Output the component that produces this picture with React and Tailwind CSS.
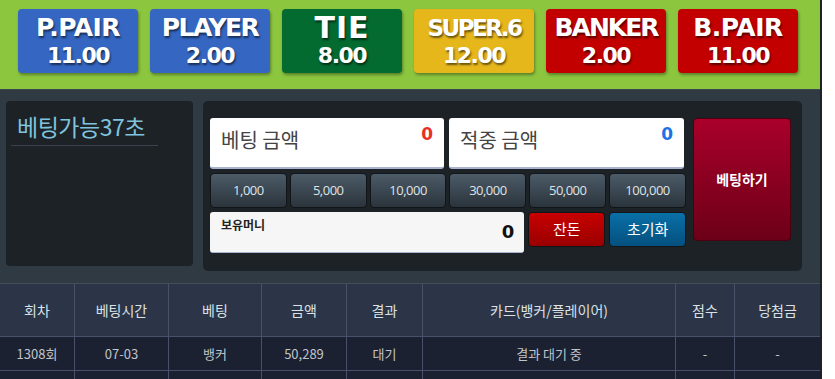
import React from 'react';

const odds = [
    { name: 'P.PAIR', value: '11.00', bg: 'bg-[#3466c2]', title: 'text-[25px] tracking-[-0.5px]' },
    { name: 'PLAYER', value: '2.00', bg: 'bg-[#3466c2]', title: 'text-[25px] tracking-[-1.5px]' },
    { name: 'TIE', value: '8.00', bg: 'bg-[#036a30]', title: 'text-[30px] tracking-[1px]' },
    { name: 'SUPER.6', value: '12.00', bg: 'bg-[#e6b71b]', title: 'text-[23px] tracking-[-2.5px]' },
    { name: 'BANKER', value: '2.00', bg: 'bg-[#c20000]', title: 'text-[25px] tracking-[-2px]' },
    { name: 'B.PAIR', value: '11.00', bg: 'bg-[#c20000]', title: 'text-[25px] tracking-[-0.5px]' },
];

const chips = ['1,000', '5,000', '10,000', '30,000', '50,000', '100,000'];

const columns = [
    { label: '회차', w: 'w-[74px]' },
    { label: '베팅시간', w: 'w-[94px]' },
    { label: '베팅', w: 'w-[93px]' },
    { label: '금액', w: 'w-[85px]' },
    { label: '결과', w: 'w-[76px]' },
    { label: '카드(뱅커/플레이어)', w: 'w-[253px]' },
    { label: '점수', w: 'w-[59px]' },
    { label: '당첨금', w: 'flex-1' },
];

const row = ['1308회', '07-03', '뱅커', '50,289', '대기', '결과 대기 중', '-', '-'];

const shadow = { textShadow: '1px 2px 2px rgba(0,0,0,0.55)' };

export default function App() {
    return (
        <div className="w-[822px] border-r-2 border-[#1d2226] font-['Noto_Sans_CJK_KR','Noto_Sans',sans-serif]">
            {/* 배당 버튼 */}
            <div className="h-[90px] bg-[#8cc63f] flex gap-[12px] pl-[18px] pt-[9px] border-b border-[#3b4650]">
                {odds.map(o => (
                    <div key={o.name} className={`${o.bg} w-[120px] h-[64px] rounded-[4px] shadow-[1px_2px_3px_rgba(0,0,0,0.35)] flex flex-col items-center pt-[4px] text-white font-['DejaVu_Sans',sans-serif] font-bold`} style={shadow}>
                        <div className={`${o.title} leading-[30px] whitespace-nowrap`}>{o.name}</div>
                        <div className="text-[22px] leading-[26px] tracking-[-1.5px]">{o.value}</div>
                    </div>
                ))}
            </div>

            {/* 베팅 영역 */}
            <div className="bg-[#2f3a43] h-[193px] flex pt-[11px] pl-[6px] gap-[10px]">
                <div className="w-[187px] h-[165px] bg-[#1c2226] rounded-[4px] pt-[10px] px-[5px]">
                    <div className="text-[#7fc3de] text-[23px] leading-[31px] pl-[6px] pb-[3px] border-b border-[#3a434b] w-[147px] whitespace-nowrap tracking-[-0.5px]">베팅가능37초</div>
                </div>
                <div className="w-[599px] h-[170px] bg-[#1c2226] rounded-[5px] flex pl-[7px] pt-[17px] gap-[7px]">
                    <div className="w-[476px] flex flex-col gap-[4px]">
                        <div className="flex gap-[5px]">
                            <div className="w-[234px] h-[51px] bg-white rounded-[3px] border-b-2 border-[#aab4d0] flex justify-between px-[11px] pt-[4px]">
                                <span className="text-[#444] text-[20px] leading-[36px]">베팅 금액</span>
                                <span className="text-[#e8302a] font-bold text-[17px] leading-[24px] font-['DejaVu_Sans',sans-serif]">0</span>
                            </div>
                            <div className="w-[235px] h-[51px] bg-white rounded-[3px] border-b-2 border-[#aab4d0] flex justify-between px-[11px] pt-[4px]">
                                <span className="text-[#444] text-[20px] leading-[36px]">적중 금액</span>
                                <span className="text-[#1c72e6] font-bold text-[17px] leading-[24px] font-['DejaVu_Sans',sans-serif]">0</span>
                            </div>
                        </div>
                        <div className="flex gap-[3px]">
                            {chips.map(c => (
                                <div key={c} className="w-[77px] h-[35px] rounded-[4px] border border-[#111518] bg-gradient-to-b from-[#4c5b68] to-[#2b343c] text-[#dfe3e6] text-[13px] flex items-center justify-center tracking-[-0.5px] font-['Open_Sans',sans-serif]">{c}</div>
                            ))}
                        </div>
                        <div className="flex gap-[4px]">
                            <div className="w-[315px] h-[41px] bg-[#f6f6f6] rounded-[3px] border-b border-[#aab4d0] flex justify-between pl-[11px] pr-[10px]">
                                <span className="text-[#222] text-[12px] font-bold leading-[26px]">보유머니</span>
                                <span className="text-[#111] text-[18px] font-bold leading-[40px] font-['DejaVu_Sans',sans-serif]">0</span>
                            </div>
                            <div className="w-[77px] h-[35px] rounded-[4px] border border-[#111518] bg-gradient-to-b from-[#c80000] to-[#9a0000] text-white text-[15px] flex items-center justify-center">잔돈</div>
                            <div className="w-[77px] h-[35px] rounded-[4px] border border-[#111518] bg-gradient-to-b from-[#0a70a8] to-[#04507e] text-white text-[15px] flex items-center justify-center">초기화</div>
                        </div>
                    </div>
                    <div className="w-[98px] h-[123px] rounded-[4px] bg-gradient-to-b from-[#a9002a] to-[#6d0018] border border-[#4a0010] text-white font-bold text-[14px] flex items-center justify-center">베팅하기</div>
                </div>
            </div>

            {/* 베팅 내역 */}
            <div className="border-t border-[#434e5c]">
                <div className="flex bg-[#2b3547] h-[53px] border-b border-[#47526a]">
                    {columns.map((c, i) => (
                        <div key={c.label} className={`${c.w} ${i > 0 ? 'border-l border-[#47526a]' : ''} flex items-center justify-center text-[#dde1e6] text-[14px]`}>{c.label}</div>
                    ))}
                </div>
                <div className="flex bg-[#1b2130] h-[34px] border-b border-[#47526a]">
                    {columns.map((c, i) => (
                        <div key={c.label} className={`${c.w} ${i > 0 ? 'border-l border-[#47526a]' : ''} flex items-center justify-center text-[#c0c5cc] text-[13px]`}>{row[i]}</div>
                    ))}
                </div>
                <div className="flex bg-[#1b2130] h-[20px]">
                    {columns.map((c, i) => (
                        <div key={c.label} className={`${c.w} ${i > 0 ? 'border-l border-[#47526a]' : ''}`}></div>
                    ))}
                </div>
            </div>
        </div>
    );
}
